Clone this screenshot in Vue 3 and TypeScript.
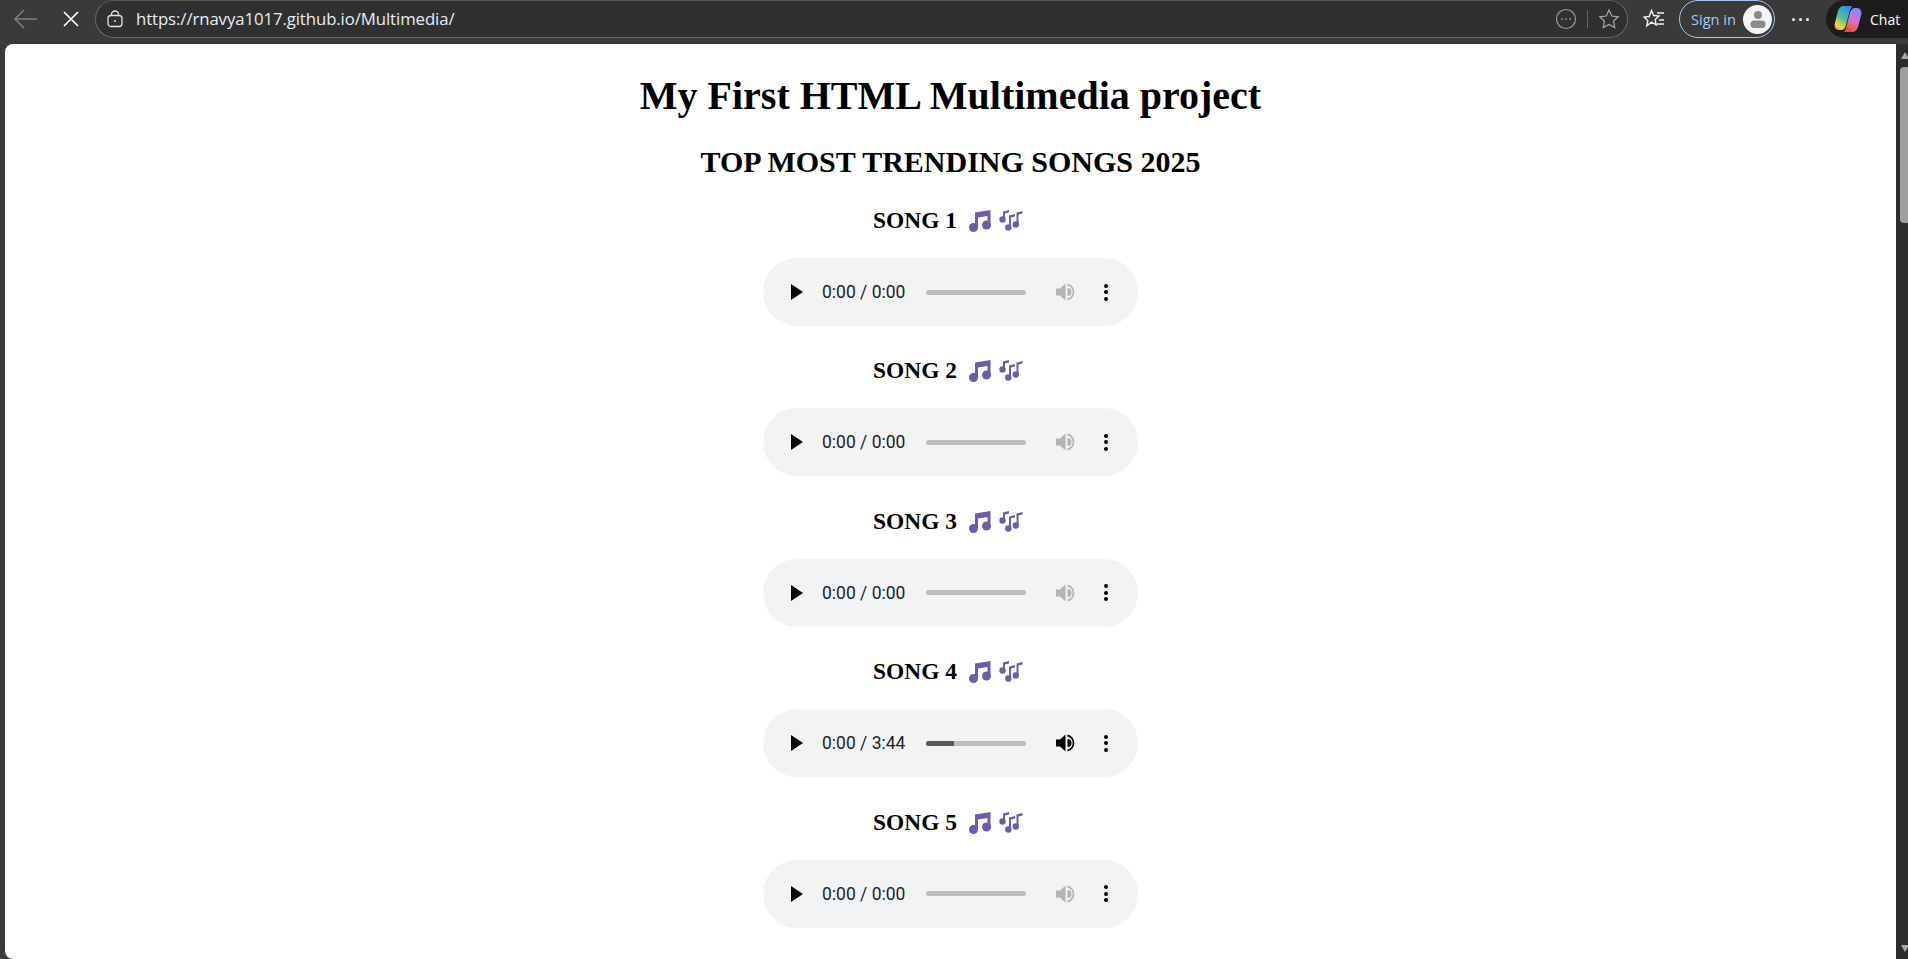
<script setup lang="ts">
const songs = [
  { name: "SONG 1", time: "0:00 / 0:00", progress: 0, ready: false },
  { name: "SONG 2", time: "0:00 / 0:00", progress: 0, ready: false },
  { name: "SONG 3", time: "0:00 / 0:00", progress: 0, ready: false },
  { name: "SONG 4", time: "0:00 / 3:44", progress: 28, ready: true },
  { name: "SONG 5", time: "0:00 / 0:00", progress: 0, ready: false },
];
</script>

<template>
  <div class="window">
    <header class="toolbar">
      <svg class="nav back" width="26" height="22" viewBox="0 0 26 22" fill="none" stroke="#7f7f7f" stroke-width="1.5">
        <path d="M25 11H3M12 2l-9 9 9 9" />
      </svg>
      <svg class="nav stop" width="16" height="16" viewBox="0 0 16 16" fill="none" stroke="#fff" stroke-width="1.7">
        <path d="M1 1l14 14M15 1L1 15" />
      </svg>
      <div class="address">
        <svg width="16" height="18" viewBox="0 0 16 18" fill="none" stroke="#e4e4e4" stroke-width="1.3">
          <rect x="1" y="5.500" width="14" height="11" rx="3" />
          <path d="M4.500 5.500V4.500a3.500 3.500 0 0 1 7 0v1" />
          <circle cx="8" cy="11" r="1" fill="#e4e4e4" stroke="none" />
        </svg>
        <span class="url">https://rnavya1017.github.io/Multimedia/</span>
        <svg class="more-circle" width="22" height="22" viewBox="0 0 22 22" fill="none" stroke="#9a9a9a" stroke-width="1.2">
          <circle cx="11" cy="11" r="9.500" />
          <path d="M6 11h1.600M10.200 11h1.600M14.400 11H16" stroke-width="1.600" />
        </svg>
        <i class="sep"></i>
        <svg class="star" width="22" height="22" viewBox="0 0 22 22" fill="none" stroke="#a8a8a8" stroke-width="1.2">
          <path d="M11 2l2.800 6 6.400.8-4.700 4.400 1.200 6.400L11 16.400 5.300 19.600l1.200-6.400L1.800 8.800 8.200 8z" />
        </svg>
      </div>
      <svg class="favs" width="22" height="20" viewBox="0 0 22 20" fill="none" stroke="#f2f2f2" stroke-width="1.400">
        <path d="M8.500 1.500l2.300 5 5.200.6-3.800 3.500 1 5.200-4.700-2.600L3.800 16.900l1-5.200L1 8.100l5.200-.6z" />
        <path d="M14 4h7M16 11h5M14 15h7" />
      </svg>
      <div class="signin">
        <span>Sign in</span>
        <span class="avatar">
          <svg width="20" height="20" viewBox="0 0 20 20" fill="#8a8a8a">
            <circle cx="10" cy="6" r="4" />
            <rect x="2.500" y="11.500" width="15" height="7.500" rx="3.500" />
          </svg>
        </span>
      </div>
      <div class="dots"><i></i><i></i><i></i></div>
      <div class="chat">
        <svg width="28" height="28" viewBox="0 0 28 28">
          <defs>
            <linearGradient id="cpa" x1=".7" y1="0" x2=".2" y2="1">
              <stop offset="0" stop-color="#2a8fea" />
              <stop offset=".5" stop-color="#45c79a" />
              <stop offset=".85" stop-color="#f4d62e" />
              <stop offset="1" stop-color="#f2a93a" />
            </linearGradient>
            <linearGradient id="cpb" x1=".7" y1="0" x2=".3" y2="1">
              <stop offset="0" stop-color="#7f8cf4" />
              <stop offset=".5" stop-color="#d86ed0" />
              <stop offset=".85" stop-color="#f0604a" />
              <stop offset="1" stop-color="#e8452f" />
            </linearGradient>
          </defs>
          <path d="M9.500 1h7.500c1 0 .8.800.4 1.400-1 1.300-1.500 2.800-2 4.600l-3.300 13c-.7 3-2.600 5-5 5H5c-3.300 0-5-3-4.200-6.500L3.700 7C4.700 3.500 6.500 1 9.500 1z" fill="url(#cpa)" />
          <path d="M18.500 27h-7.500c-1 0-.8-.8-.4-1.400 1-1.300 1.500-2.800 2-4.600l3.300-13c.7-3 2.600-5 5-5H23c3.300 0 5 3 4.200 6.500L24.300 21c-1 3.500-2.800 6-5.800 6z" fill="url(#cpb)" />
        </svg>
        <span>Chat</span>
      </div>
    </header>

    <div class="body">
      <main class="page">
        <h1>My First HTML Multimedia project</h1>
        <h2>TOP MOST TRENDING SONGS 2025</h2>
        <section v-for="s in songs" :key="s.name" class="song">
          <h3>
            {{ s.name }}
            <svg class="note" width="26" height="26" viewBox="0 0 26 26" fill="#6e5ca8">
              <path d="M8 5.500L23.500 3v15.500h-3V9L11 10.500v10h-3z" />
              <circle cx="6.500" cy="20.500" r="4.500" />
              <circle cx="19.500" cy="18" r="4.500" />
            </svg>
            <svg class="notes" width="26" height="26" viewBox="0 0 26 26" fill="#6e5ca8">
              <path d="M5 4.500l6-1.500v2.500L7 6.500v6H5z" />
              <circle cx="4.500" cy="12.500" r="3.200" />
              <path d="M11 8.500l6-1.500v2.500l-4 1v10h-2z" />
              <circle cx="10.300" cy="20.500" r="3.200" />
              <path d="M18.500 5.500l6-1.500v2.500l-4 1v10h-2z" />
              <circle cx="17.800" cy="17.500" r="3.200" />
            </svg>
          </h3>
          <div class="audio">
            <svg class="play" width="14" height="16" viewBox="0 0 14 16"><path d="M1 0l12 8-12 8z" /></svg>
            <span class="time">{{ s.time }}</span>
            <div class="track">
              <div class="fill" :style="{ width: s.progress + '%' }"></div>
            </div>
            <svg class="vol" :class="{ off: !s.ready }" width="20" height="20" viewBox="0 0 20 20">
              <path d="M0 6.500h4L9.500 1.500v17L4 13.500H0z" />
              <path d="M11.500 6v8a4 4 0 0 0 0-8z" />
              <path d="M11.500 1.500a8.700 8.700 0 0 1 0 17v-2a6.700 6.700 0 0 0 0-13z" />
            </svg>
            <div class="kebab"><i></i><i></i><i></i></div>
          </div>
        </section>
      </main>
      <div class="scrollbar">
        <i class="arrow up"></i>
        <i class="thumb"></i>
        <i class="arrow down"></i>
      </div>
    </div>
  </div>
</template>

<style>
html, body { margin: 0; height: 100%; overflow: hidden; background: #3a3a3a; }
</style>

<style scoped>
.window { height: 959px; display: flex; flex-direction: column; background: #3a3a3a; overflow: hidden; }

.toolbar { height: 44px; flex: none; display: flex; align-items: center; padding-bottom: 6px; box-sizing: border-box; color: #fff; font-family: "Open Sans", sans-serif; }
.nav { flex: none; }
.back { margin-left: 12px; }
.stop { margin-left: 25px; }
.address { flex: none; width: 1533px; height: 38px; margin-left: 16px; box-sizing: border-box; padding: 0 7px 0 11px; display: flex; align-items: center; background: #303030; border: 1px solid #6a6a6a; border-top-color: #555; border-radius: 19px; }
.url { margin-left: 13px; padding-bottom: 2px; font-size: 16.800px; color: #e6edf5; flex: 1; white-space: nowrap; letter-spacing: -.1px; }
.more-circle { flex: none; }
.sep { width: 1px; height: 18px; background: #666; margin: 0 10px; }
.star { flex: none; }
.favs { flex: none; margin-left: 15px; }
.signin { flex: none; width: 96px; height: 38px; margin-left: 14px; box-sizing: border-box; padding: 0 2px 0 11px; display: flex; align-items: center; justify-content: space-between; border: 1px solid #a8c4ee; border-radius: 19px; font-size: 14.600px; color: #a8c8f4; }
.avatar { width: 29px; height: 29px; background: #f4f4f4; border-radius: 50%; display: flex; align-items: center; justify-content: center; }
.dots { flex: none; display: flex; gap: 4px; margin-left: 17px; }
.dots i { width: 3px; height: 3px; background: #eee; border-radius: 50%; }
.chat { flex: none; height: 38px; margin-left: 17px; padding: 0 20px 0 8px; display: flex; align-items: center; gap: 8px; background: #1c1c1c; border-radius: 19px 0 0 19px; font-size: 14px; }

.body { flex: 1; min-height: 0; display: flex; padding-left: 5px; }
.page { flex: 1; min-width: 0; background: #fff; border-radius: 8px 0 0 8px; overflow: hidden; text-align: center; font-family: "Liberation Serif", "Times New Roman", serif; color: #000; }
h1 { font-size: 40px; font-weight: 700; line-height: 46px; margin: 29px 0 0; }
h2 { font-size: 30px; font-weight: 700; line-height: 34px; margin: 26px 0 0; }
.song { margin-top: 17px; }
h2 + .song { margin-top: 25px; }
h3 { font-size: 23.400px; font-weight: 700; line-height: 32px; margin: 0; padding-right: 4px; display: flex; justify-content: center; align-items: center; gap: 10px; }
.note, .notes { flex: none; }
.notes { margin-left: -5px; }

.audio { width: 375px; height: 68px; margin: 22px auto 28.400px; padding: 0 22px 0 27px; box-sizing: border-box; display: flex; align-items: center; background: #f1f3f4; border-radius: 34px; font-family: Roboto, sans-serif; }
.play { flex: none; fill: #000; }
.time { margin-left: 18px; width: 104px; flex: none; font-size: 17.500px; color: #1f1f1f; text-align: left; white-space: nowrap; }
.track { width: 100px; height: 5px; flex: none; background: #bdbdbd; border-radius: 3px; overflow: hidden; }
.fill { height: 100%; background: #5a5a5a; }
.vol { flex: none; margin-left: 30px; fill: #000; }
.vol.off { fill: #b4b4b4; }
.kebab { flex: none; margin-left: 28px; display: flex; flex-direction: column; gap: 2.500px; }
.kebab i { width: 4px; height: 4px; background: #000; border-radius: 50%; }

.scrollbar { width: 12px; flex: none; position: relative; background: #2c2c2c; overflow: hidden; }
.thumb { position: absolute; top: 23px; left: 4px; right: 0; height: 156px; background: #9f9f9f; border-radius: 4px 0 0 4px; }
.arrow { position: absolute; left: 5px; width: 0; height: 0; border-left: 4.500px solid transparent; border-right: 4.500px solid transparent; }
.arrow.up { top: 8px; border-bottom: 7px solid #a8a8a8; }
.arrow.down { bottom: 7px; border-top: 7px solid #a8a8a8; }
</style>
